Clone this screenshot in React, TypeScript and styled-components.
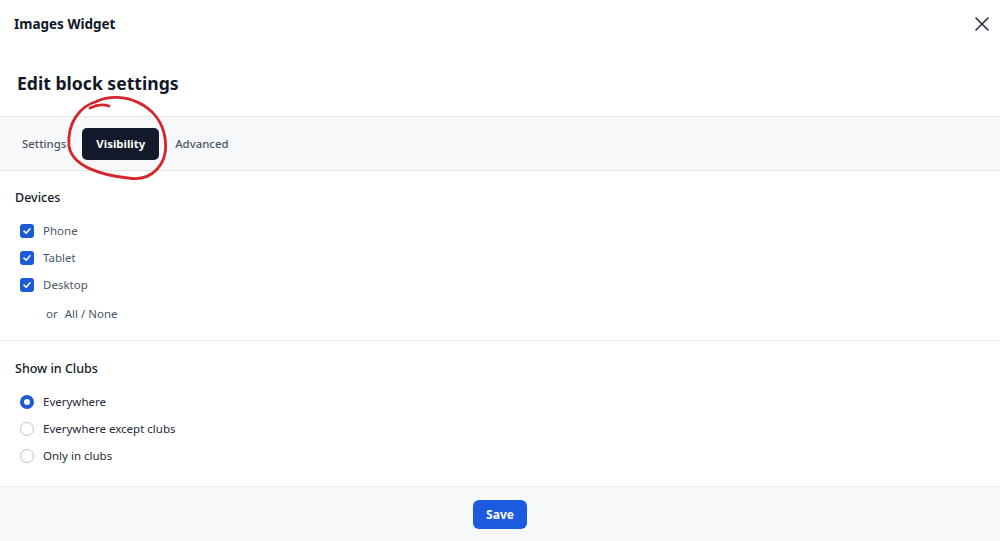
import styled, { createGlobalStyle } from "styled-components";

const GlobalStyle = createGlobalStyle`
  html, body {
    margin: 0;
    padding: 0;
    background: #ffffff;
    font-family: "Noto Sans", "Open Sans", sans-serif;
    color: #111827;
  }
  * { box-sizing: border-box; }
`;

const devices = ["Phone", "Tablet", "Desktop"];
const clubOptions = ["Everywhere", "Everywhere except clubs", "Only in clubs"];

export default function App() {
  return (
    <>
      <GlobalStyle />
      <Modal>
        <Header>
          <HeaderTitle>Images Widget</HeaderTitle>
          <CloseButton aria-label="close">
            <svg width="14" height="14" viewBox="0 0 14 14">
              <path d="M1 1 L13 13 M13 1 L1 13" stroke="#1f2937" strokeWidth="1.5" strokeLinecap="round" />
            </svg>
          </CloseButton>
        </Header>
        <TitleBlock>
          <Title>Edit block settings</Title>
        </TitleBlock>
        <TabBar>
          <Tab>Settings</Tab>
          <Tab active>Visibility</Tab>
          <Tab>Advanced</Tab>
          <Scribble width="110" height="95" viewBox="62 92 110 95">
            <path
              d="M97 101 C122 90 160 104 165 138 C169 164 152 182 128 178 C100 175 72 166 69 146 C67 124 79 106 98 101"
              fill="none"
              stroke="#d3262c"
              strokeWidth="2.8"
              strokeLinecap="round"
            />
            <path d="M90 108 C96 105 103 104 109 106" fill="none" stroke="#d3262c" strokeWidth="2.8" strokeLinecap="round" />
          </Scribble>
        </TabBar>
        <Section>
          <SectionHeading>Devices</SectionHeading>
          <List>
            {devices.map((d) => (
              <OptionRow key={d}>
                <CheckBox>
                  <svg width="10" height="10" viewBox="0 0 10 10">
                    <path d="M2 5.2 L4.2 7.2 L8 2.8" fill="none" stroke="#fff" strokeWidth="1.6" strokeLinecap="round" strokeLinejoin="round" />
                  </svg>
                </CheckBox>
                <OptionLabel>{d}</OptionLabel>
              </OptionRow>
            ))}
            <OrRow>
              <span>or</span>
              <OrLink>All / None</OrLink>
            </OrRow>
          </List>
        </Section>
        <Section last>
          <SectionHeading>Show in Clubs</SectionHeading>
          <List>
            {clubOptions.map((o, i) => (
              <OptionRow key={o}>
                <Radio checked={i === 0} />
                <OptionLabel strong>{o}</OptionLabel>
              </OptionRow>
            ))}
          </List>
        </Section>
        <Footer>
          <SaveButton>Save</SaveButton>
        </Footer>
      </Modal>
    </>
  );
}

const Modal = styled.div`
  width: 1000px;
  height: 541px;
  display: flex;
  flex-direction: column;
  background: #ffffff;
  overflow: hidden;
`;

const Header = styled.div`
  height: 48px;
  padding: 0 14px;
  display: flex;
  align-items: center;
  justify-content: space-between;
`;

const HeaderTitle = styled.div`
  font-size: 13.5px;
  font-weight: 700;
  color: #111827;
`;

const CloseButton = styled.button`
  border: none;
  background: none;
  padding: 0;
  margin-right: -3px;
  display: flex;
  cursor: pointer;
`;

const TitleBlock = styled.div`
  padding: 22px 17px 20px;
`;

const Title = styled.h1`
  margin: 0;
  font-size: 17.6px;
  line-height: 26px;
  font-weight: 700;
  color: #111827;
`;

const TabBar = styled.div`
  position: relative;
  height: 55px;
  border-top: 1px solid #e3e6eb;
  border-bottom: 1px solid #e3e6eb;
  background: #f7f8fa;
  display: flex;
  align-items: center;
  padding: 0 6px;
`;

const Tab = styled.div<{ active?: boolean }>`
  height: 32px;
  padding: 0 ${(p) => (p.active ? "14px" : "16px")};
  display: flex;
  align-items: center;
  border-radius: 5px;
  font-size: 11.4px;
  font-weight: ${(p) => (p.active ? 700 : 500)};
  color: ${(p) => (p.active ? "#ffffff" : "#4b5563")};
  background: ${(p) => (p.active ? "#121a2c" : "transparent")};
`;

const Scribble = styled.svg`
  position: absolute;
  left: 62px;
  top: -25px;
  pointer-events: none;
`;

const Section = styled.div<{ last?: boolean }>`
  padding: ${(p) => (p.last ? "19px 15px 17px" : "18px 15px 13px")};
  border-bottom: 1px solid #eceef1;
`;

const SectionHeading = styled.div`
  font-size: 12.5px;
  line-height: 18px;
  font-weight: 500;
  color: #111827;
  margin-bottom: 10px;
`;

const List = styled.div`
  display: flex;
  flex-direction: column;
`;

const OptionRow = styled.div`
  height: 27px;
  display: flex;
  align-items: center;
  gap: 9px;
  padding-left: 5px;
`;

const CheckBox = styled.span`
  width: 14px;
  height: 14px;
  border-radius: 3px;
  background: #1d5ad8;
  display: flex;
  align-items: center;
  justify-content: center;
`;

const Radio = styled.span<{ checked?: boolean }>`
  width: 14px;
  height: 14px;
  border-radius: 50%;
  background: #ffffff;
  border: ${(p) => (p.checked ? "4px solid #1d5ad8" : "1px solid #bfc3c9")};
`;

const OptionLabel = styled.span<{ strong?: boolean }>`
  font-size: 11.5px;
  color: ${(p) => (p.strong ? "#1f2937" : "#4b5563")};
`;

const OrRow = styled.div`
  height: 27px;
  margin-top: 2px;
  display: flex;
  align-items: center;
  padding-left: 31px;
  gap: 7px;
  font-size: 11.5px;
  color: #4b5563;
`;

const OrLink = styled.span`
  cursor: pointer;
`;

const Footer = styled.div`
  flex: 1;
  background: #f7f8fa;
  display: flex;
  align-items: center;
  justify-content: center;
`;

const SaveButton = styled.button`
  height: 29px;
  width: 54px;
  border: none;
  border-radius: 6px;
  background: #1a5be0;
  color: #ffffff;
  font-family: inherit;
  font-size: 12px;
  font-weight: 700;
  cursor: pointer;
`;
